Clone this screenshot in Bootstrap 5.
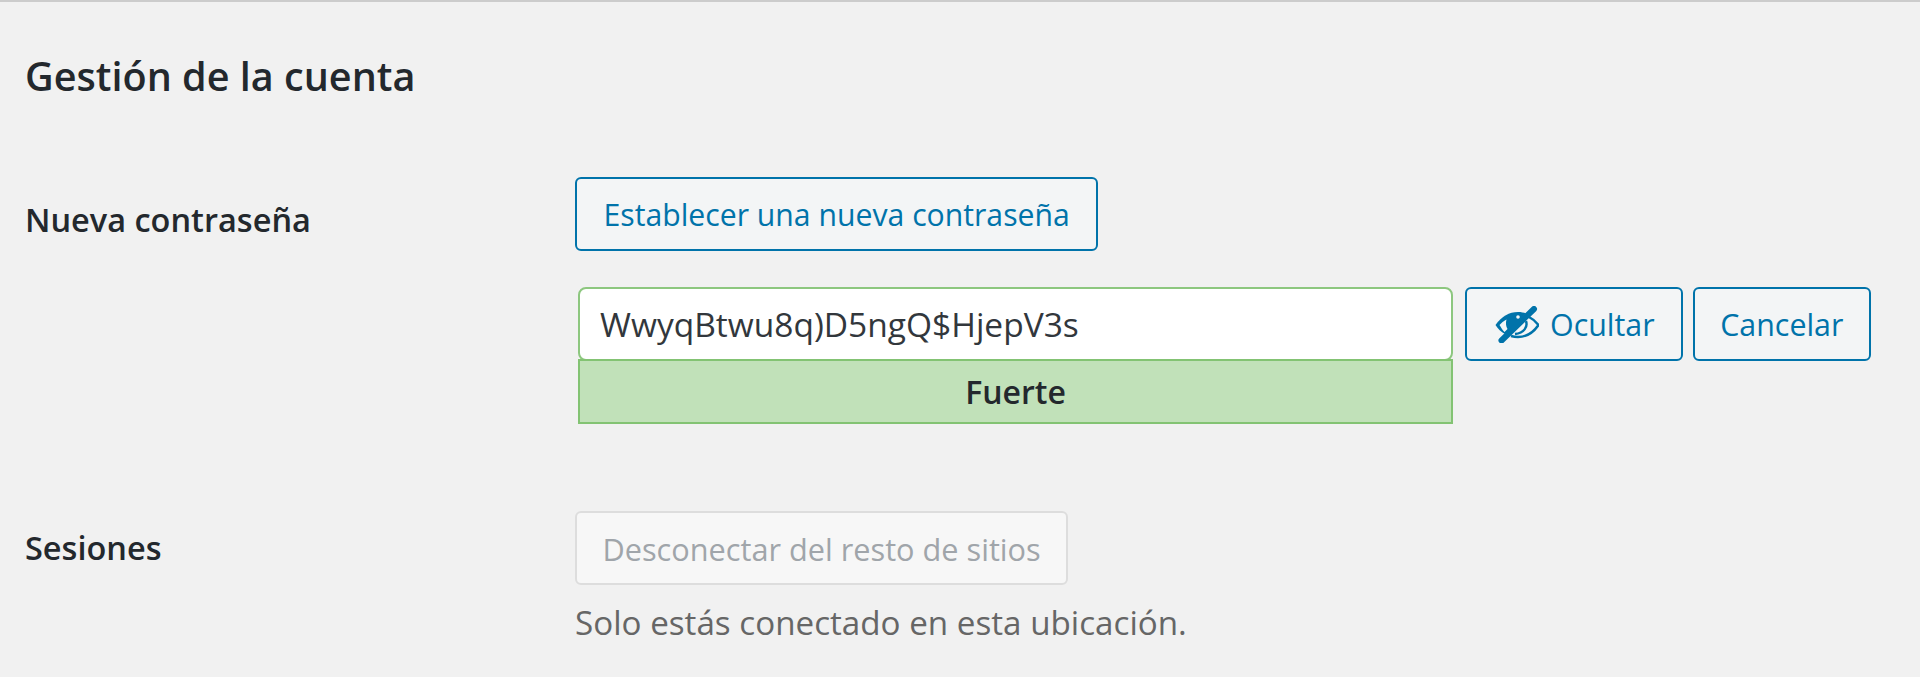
<!DOCTYPE html>
<html lang="es">
<head>
    <meta charset="UTF-8">
    <meta name="viewport" content="width=device-width, initial-scale=1.0">
    <title>Gestión de la cuenta</title>
    <link href="https://cdn.jsdelivr.net/npm/bootstrap@5.3.0/dist/css/bootstrap.min.css" rel="stylesheet">
    <style>
        body {
            background: #f1f1f1;
            color: #23282d;
            font-family: "Open Sans", "Noto Sans", sans-serif;
            border-top: 2px solid #ccc;
            overflow: hidden;
        }
        .account-title {
            font-size: 39.6px;
            font-weight: 600;
            line-height: 48px;
            margin: 0;
            padding: 50px 0 0 25px;
        }
        .field-row { padding-left: 25px; }
        .first-row { margin-top: 77px; }
        .second-row { margin-top: 87px; }
        .field-label {
            width: 550px;
            flex: none;
            font-weight: 600;
            font-size: 32.5px;
            line-height: 48px;
        }
        .label-low { padding-top: 19px; }
        .label-mid { padding-top: 13px; }
        .wp-btn {
            height: 74px;
            padding: 3px 26.5px 0;
            font-size: 30.2px;
            line-height: 1;
            color: #0073aa;
            background: #f3f5f6;
            border: 2px solid #0073aa;
            border-radius: 6px;
            white-space: nowrap;
        }
        .wp-btn:disabled {
            font-size: 30.7px;
            padding: 2px 25.5px 0;
            color: #a0a5aa;
            background: #f7f7f7;
            border-color: #ddd;
            opacity: 1;
        }
        .pass-row { margin-top: 36px; }
        .pass-box { width: 875px; margin-left: 3px; }
        .pass-input {
            height: 74px;
            padding: 0 20px;
            font-size: 33.5px;
            color: #32373c;
            background: #fff;
            border: 2px solid #8dc77f;
            border-radius: 8px;
        }
        .pass-meter {
            height: 65px;
            margin-top: -2px;
            background: #c1e1b9;
            border: 2px solid #83c373;
            font-size: 32px;
            font-weight: 600;
            line-height: 62px;
            text-align: center;
        }
        .hide-btn { margin-left: 12px; padding: 3px 26px 0 28px; font-size: 30.4px; }
        .cancel-btn { margin-left: 10px; padding: 3px 25.5px 0; font-size: 30.4px; }
        .eye-icon { margin-right: 11px; margin-top: -3px; }
        .note-text { font-size: 33.2px; color: #666; line-height: 46px; margin-top: 15px; }
    </style>
</head>
<body>
    <h2 class="account-title">Gestión de la cuenta</h2>

    <div class="field-row first-row d-flex">
        <div class="field-label label-low">Nueva contraseña</div>
        <div class="flex-grow-1">
            <button class="btn wp-btn" type="button">Establecer una nueva contraseña</button>
            <div class="pass-row d-flex align-items-start">
                <div class="pass-box">
                    <input class="form-control pass-input" type="text" value="WwyqBtwu8q)D5ngQ$HjepV3s">
                    <div class="pass-meter">Fuerte</div>
                </div>
                <button class="btn wp-btn hide-btn d-flex align-items-center" type="button">
                    <svg class="eye-icon" width="44" height="37" viewBox="0 0 44 37" aria-hidden="true">
                        <path d="M.5 19C7 10 14 6 23 6c3 0 6 .5 8 1.500L10 28C6 26 3 23 .5 19z" fill="#0073aa"/>
                        <path d="M4.500 19c2-2 4-4 7-5.500-1 3.500-.5 7 1 9.500l-3 3C7.500 24 6 21.500 4.500 19z" fill="#f3f5f6"/>
                        <circle cx="23" cy="11" r="1.800" fill="#f3f5f6"/>
                        <path d="M34 11c4 2 7 4.500 9.500 8C38 27 31 31 23 31c-3 0-5-.4-7-1" fill="none" stroke="#0073aa" stroke-width="2.400"/>
                        <path d="M31 15c2 6-2 12-11 13" fill="none" stroke="#0073aa" stroke-width="2.400"/>
                        <path d="M39 3L6.500 34.500" stroke="#0073aa" stroke-width="6" stroke-linecap="round"/>
                    </svg>
                    Ocultar
                </button>
                <button class="btn wp-btn cancel-btn" type="button">Cancelar</button>
            </div>
        </div>
    </div>

    <div class="field-row second-row d-flex">
        <div class="field-label label-mid">Sesiones</div>
        <div class="flex-grow-1">
            <button class="btn wp-btn" type="button" disabled>Desconectar del resto de sitios</button>
            <div class="note-text">Solo estás conectado en esta ubicación.</div>
        </div>
    </div>
    <script src="https://cdn.jsdelivr.net/npm/bootstrap@5.3.0/dist/js/bootstrap.bundle.min.js"></script>
</body>
</html>
